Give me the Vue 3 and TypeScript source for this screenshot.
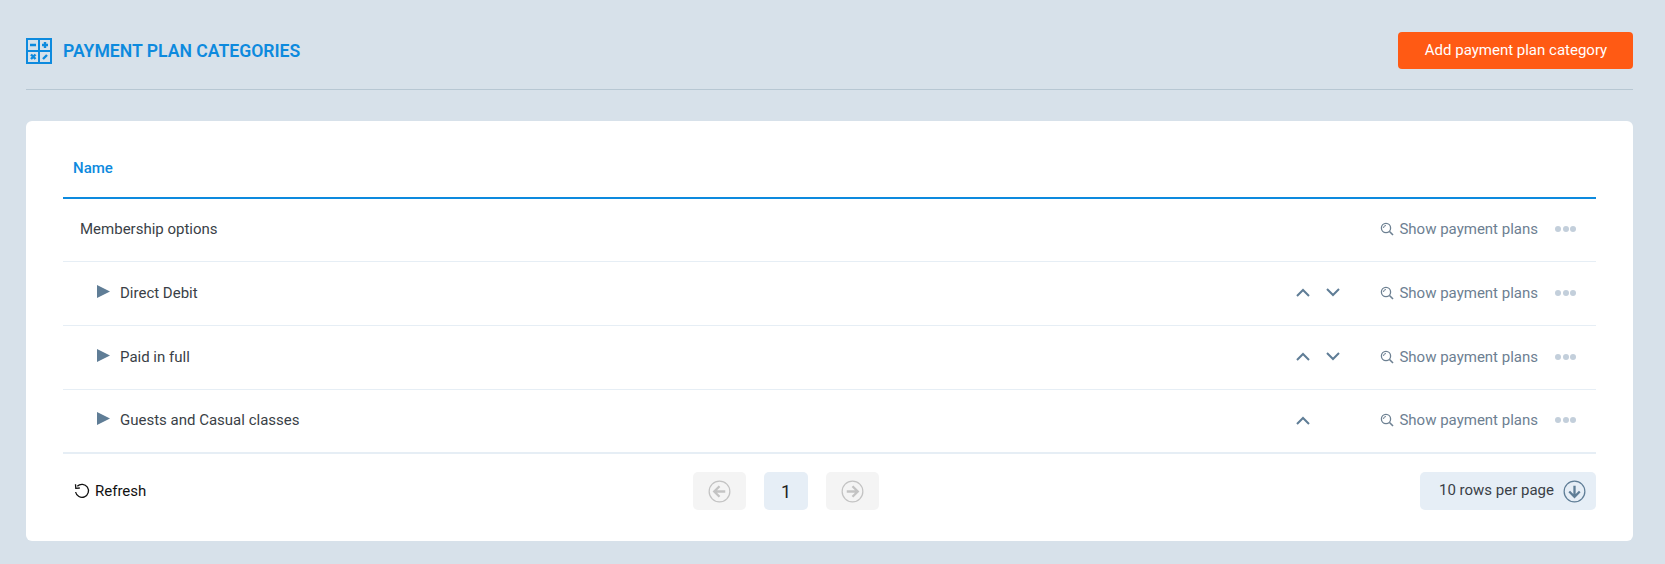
<template>
  <div class="page">
    <header class="page-head">
      <div class="title">
        <svg class="title-icon" viewBox="0 0 26 26" width="26" height="26">
          <rect x="1" y="1" width="24" height="24" fill="none" stroke="#0d8ade" stroke-width="2" />
          <path d="M13 1V25M1 13H25" fill="none" stroke="#0d8ade" stroke-width="2" />
          <path d="M4 7H10M16 7H22M19 4V10M5 16.500L9.500 21M9.500 16.500L5 21M17 21L21 17" fill="none" stroke="#0d8ade" stroke-width="2.400" />
        </svg>
        <h1>PAYMENT PLAN CATEGORIES</h1>
      </div>
      <button class="add-btn">Add payment plan category</button>
    </header>

    <section class="card">
      <div class="table-head">Name</div>
      <div v-for="row in rows" :key="row.name" class="row" :class="{ child: row.child }">
        <svg v-if="row.child" class="caret" viewBox="0 0 13 13" width="13" height="13">
          <path d="M0 0L13 6.500L0 13Z" fill="#5f7d96" />
        </svg>
        <span class="row-name">{{ row.name }}</span>
        <div v-if="row.child" class="sort">
          <svg v-if="row.up" viewBox="0 0 14 9" width="14" height="9">
            <path d="M1 8L7 2L13 8" fill="none" stroke="#5f7d96" stroke-width="2" />
          </svg>
          <svg v-if="row.down" viewBox="0 0 14 9" width="14" height="9">
            <path d="M1 1L7 7L13 1" fill="none" stroke="#5f7d96" stroke-width="2" />
          </svg>
        </div>
        <a class="show-link">
          <svg viewBox="0 0 14 14" width="14" height="14">
            <circle cx="6" cy="6" r="4.600" fill="none" stroke="#6d8092" stroke-width="1.300" />
            <path d="M9.500 9.500L13 13" stroke="#6d8092" stroke-width="1.600" />
            <path d="M3.500 6A2.500 2.500 0 0 1 6 3.500" fill="none" stroke="#6d8092" stroke-width="1" />
          </svg>
          Show payment plans
        </a>
        <div class="dots"><i /><i /><i /></div>
      </div>

      <footer class="table-foot">
        <button class="refresh">
          <svg viewBox="0 0 16 16" width="16" height="16">
            <path d="M3.300 3.300A6.500 6.500 0 1 1 1.600 9" fill="none" stroke="#111" stroke-width="1.300" />
            <path d="M1.500 1.300L1.800 5.300L5.800 5" fill="none" stroke="#111" stroke-width="1.300" />
          </svg>
          Refresh
        </button>
        <nav class="pager">
          <span class="page-btn off">
            <svg viewBox="0 0 24 24" width="23" height="23">
              <circle cx="12" cy="12" r="10.800" fill="none" stroke="#c3c3c3" stroke-width="1.300" />
              <path d="M18 12H7M12 6.500L6.500 12L12 17.500" fill="none" stroke="#c3c3c3" stroke-width="2.400" />
            </svg>
          </span>
          <span class="page-num">1</span>
          <span class="page-btn off">
            <svg viewBox="0 0 24 24" width="23" height="23">
              <circle cx="12" cy="12" r="10.800" fill="none" stroke="#c3c3c3" stroke-width="1.300" />
              <path d="M6 12H17M12 6.500L17.500 12L12 17.500" fill="none" stroke="#c3c3c3" stroke-width="2.400" />
            </svg>
          </span>
        </nav>
        <div class="per-page">
          <span>10 rows per page</span>
          <svg viewBox="0 0 24 24" width="23" height="23">
            <circle cx="12" cy="12" r="10.800" fill="none" stroke="#5f7d96" stroke-width="1.300" />
            <path d="M12 6V17M6.500 12L12 17.500L17.500 12" fill="none" stroke="#5f7d96" stroke-width="2.400" />
          </svg>
        </div>
      </footer>
    </section>
  </div>
</template>

<script setup lang="ts">
interface Row {
  name: string
  child: boolean
  up?: boolean
  down?: boolean
}

const rows: Row[] = [
  { name: 'Membership options', child: false },
  { name: 'Direct Debit', child: true, up: true, down: true },
  { name: 'Paid in full', child: true, up: true, down: true },
  { name: 'Guests and Casual classes', child: true, up: true },
]
</script>

<style>
html,
body {
  margin: 0;
  background: #d7e1ea;
}
</style>

<style scoped>
.page {
  box-sizing: border-box;
  width: 1665px;
  height: 564px;
  padding: 32px 32px 0 26px;
  background: #d7e1ea;
  font-family: Roboto, "Liberation Sans", sans-serif;
}

.page-head {
  display: flex;
  align-items: center;
  justify-content: space-between;
  height: 37px;
  padding-bottom: 20px;
  border-bottom: 1px solid #b7c7d3;
}

.title {
  display: flex;
  align-items: center;
  gap: 11px;
}

.title-icon {
  display: block;
}

h1 {
  margin: 0;
  font-size: 17.6px;
  font-weight: 600;
  color: #0d8ade;
}

.add-btn {
  width: 235px;
  height: 37px;
  padding: 0 0 2px 1px;
  border: 0;
  border-radius: 4px;
  background: #ff5a14;
  color: #fff;
  font: 400 15px Roboto, "Liberation Sans", sans-serif;
}

.card {
  margin-top: 31px;
  height: 420px;
  box-sizing: border-box;
  padding: 0 37px;
  background: #fff;
  border-radius: 6px;
}

.table-head {
  box-sizing: border-box;
  height: 78px;
  padding: 37px 0 0 10px;
  border-bottom: 2px solid #0d8ade;
  font-size: 15px;
  font-weight: 500;
  line-height: 20px;
  color: #0d8ade;
}

.row {
  display: flex;
  align-items: center;
  box-sizing: border-box;
  height: 64px;
  padding: 0 20px 2px 17px;
  border-bottom: 1px solid #e6eef5;
  font-size: 15px;
  color: #3a3f47;
}

.row:nth-child(2) {
  height: 63px;
}

.row:last-of-type {
  border-bottom-width: 2px;
}

.row.child {
  padding-left: 34px;
}

.caret {
  margin: -3px 10px 0 0;
}

.row-name {
  flex: 1;
}

.sort {
  display: flex;
  align-items: center;
  gap: 16px;
  width: 44px;
  margin-right: 40px;
}

.show-link {
  display: flex;
  align-items: center;
  gap: 5px;
  color: #6d8092;
}

.dots {
  display: flex;
  gap: 1.5px;
  margin-left: 17px;
}

.dots i {
  width: 6px;
  height: 6px;
  border-radius: 50%;
  background: #c3cfdb;
}

.table-foot {
  display: flex;
  align-items: center;
  padding: 18px 0 0 11px;
}

.refresh {
  flex: 0 0 619px;
  display: flex;
  align-items: center;
  gap: 5px;
  padding: 0;
  border: 0;
  background: none;
  color: #111;
  font: 400 15px Roboto, "Liberation Sans", sans-serif;
}

.pager {
  display: flex;
  gap: 18px;
}

.page-btn,
.page-num {
  display: flex;
  align-items: center;
  justify-content: center;
  height: 38px;
  border-radius: 5px;
}

.page-btn {
  width: 53px;
}

.page-btn.off {
  background: #f4f4f4;
}

.page-num {
  width: 44px;
  background: #e6eef6;
  font-size: 18px;
  color: #222;
}

.per-page {
  display: flex;
  align-items: center;
  justify-content: space-between;
  box-sizing: border-box;
  width: 176px;
  height: 38px;
  margin-left: auto;
  padding: 0 10px 0 19px;
  border-radius: 5px;
  background: #e6eef6;
  font-size: 15px;
  color: #3a3f47;
}

.per-page span {
  margin-top: -2px;
}
</style>
